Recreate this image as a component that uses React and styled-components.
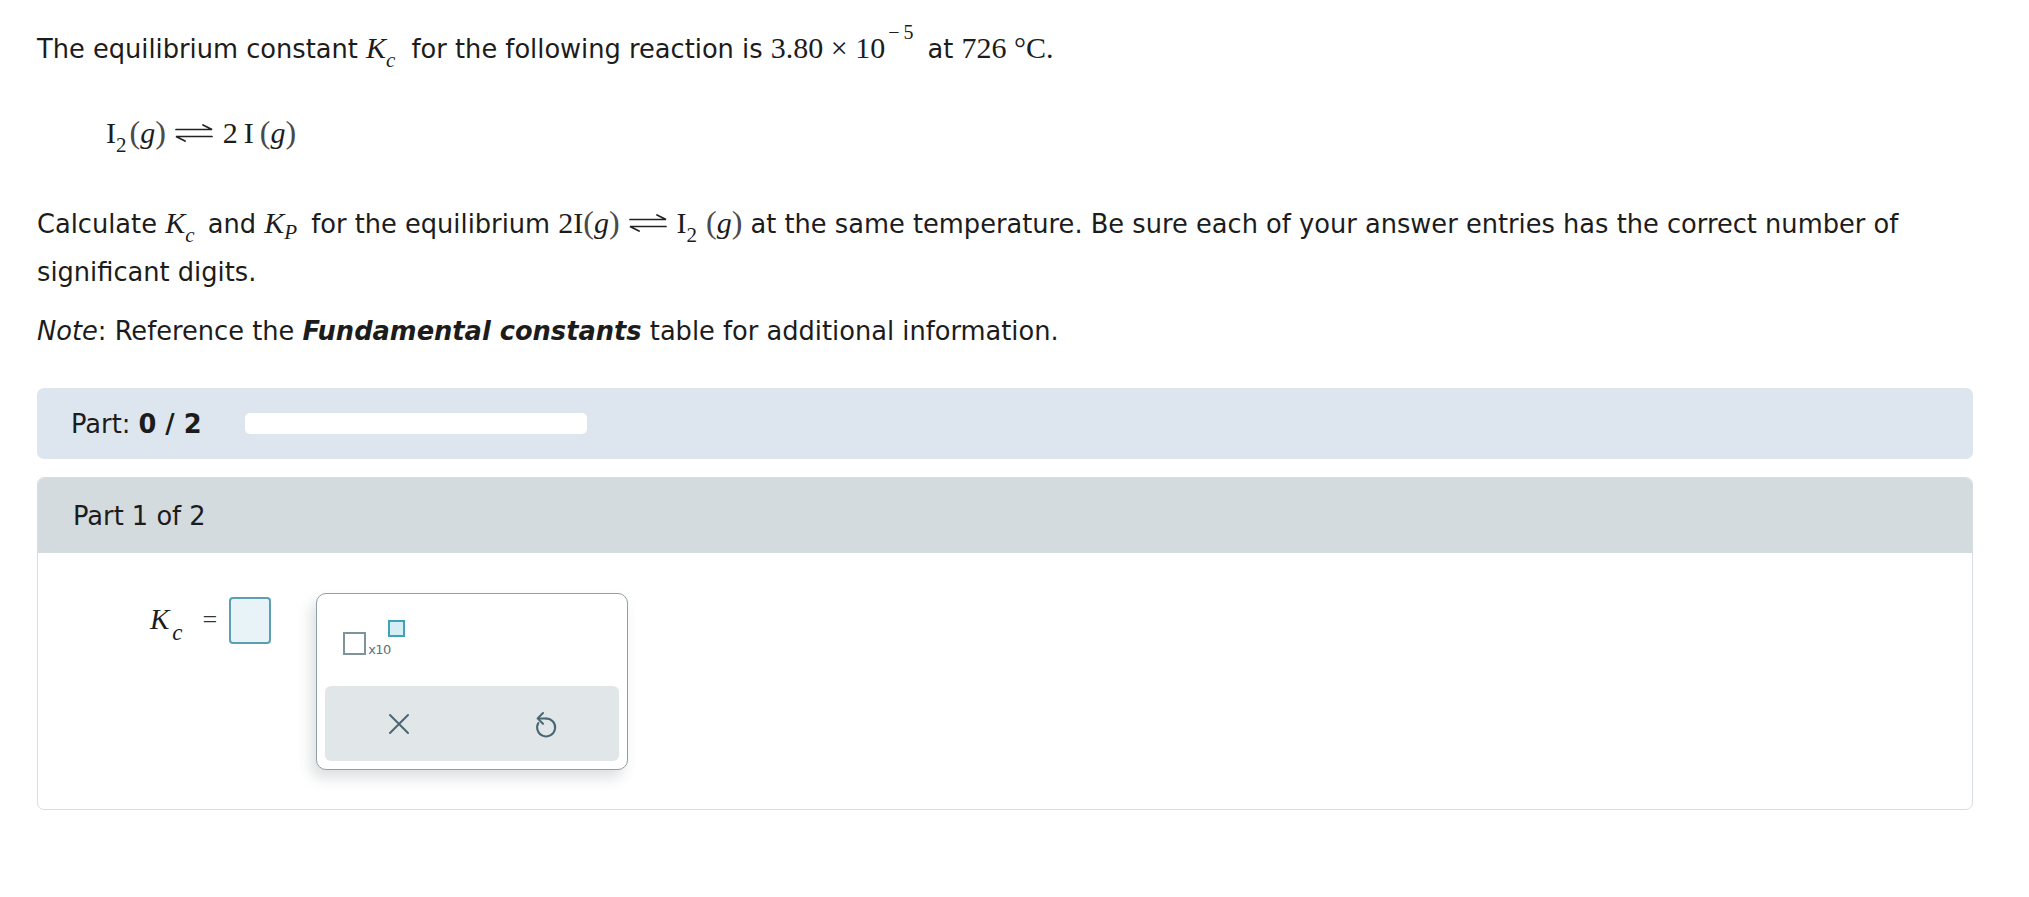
import React from 'react';
import styled, { createGlobalStyle } from 'styled-components';

const GlobalStyle = createGlobalStyle`
  html, body {
    margin: 0;
    padding: 0;
    background: #ffffff;
  }
  body {
    font-family: "DejaVu Sans", Verdana, sans-serif;
    color: #1c1c1c;
  }
  * { box-sizing: border-box; }
`;

const Page = styled.div`
  width: 2029px;
  padding: 22px 56px 0 37px;
`;

const Text = styled.p`
  margin: ${p => p.$mt || 0}px 0 0 ${p => p.$indent || 0}px;
  font-size: 25.7px;
  line-height: 48px;
`;

const M = styled.span`
  font-family: "Liberation Serif", "Times New Roman", serif;
  font-size: ${p => p.$size || 30}px;
  font-style: ${p => (p.$i ? 'italic' : 'normal')};
  line-height: 1;
  color: #1c1c1c;
`;

const Paren = styled.span`
  font-family: "Liberation Serif", "Times New Roman", serif;
  font-size: 32px;
  line-height: 1;
  color: #4a4a4a;
`;

const Sub = styled.span`
  font-family: "Liberation Serif", "Times New Roman", serif;
  font-size: ${p => p.$size || 21}px;
  font-style: ${p => (p.$i ? 'italic' : 'normal')};
  line-height: 1;
  vertical-align: ${p => p.$drop || -0.45}em;
  margin-left: ${p => p.$ml || 0}px;
  margin-right: ${p => p.$mr || 0}px;
`;

const Sup = styled.span`
  font-family: "Liberation Serif", "Times New Roman", serif;
  font-size: 20px;
  line-height: 1;
  vertical-align: 0.95em;
  margin-left: 3px;
  margin-right: 6px;
`;

const Bold = styled.b`
  font-weight: 700;
  font-style: ${p => (p.$i ? 'italic' : 'normal')};
`;

const ArrowSvg = styled.svg`
  display: inline-block;
  vertical-align: 0.05em;
  margin: 0 9px 0 8px;
`;

const EqArrow = () => (
  <ArrowSvg width="40" height="18" viewBox="0 0 40 18">
    <g stroke="#222" strokeWidth="1.7" fill="none" strokeLinecap="round">
      <path d="M2 5.5 H38 L29 1" />
      <path d="M38 12.5 H2 L11 17" />
    </g>
  </ArrowSvg>
);

const PartBar = styled.div`
  margin-top: 33px;
  height: 71px;
  background: #dde6ee;
  border-radius: 7px;
  display: flex;
  align-items: center;
  gap: 43px;
  padding-left: 34px;
  font-size: 25.7px;
`;

const Progress = styled.div`
  width: 342px;
  height: 21px;
  background: #ffffff;
  border-radius: 5px;
`;

const Card = styled.section`
  margin-top: 18px;
  border: 1px solid #d6dee3;
  border-radius: 7px;
  overflow: hidden;
`;

const CardHead = styled.div`
  height: 75px;
  background: #d3dbdf;
  display: flex;
  align-items: center;
  padding-left: 35px;
  font-size: 25.7px;
`;

const CardBody = styled.div`
  display: flex;
  align-items: flex-start;
  padding: 40px 0 39px 112px;
`;

const AnswerRow = styled.div`
  display: flex;
  align-items: center;
  height: 54px;
`;

const Label = styled.span`
  line-height: 1;
  white-space: nowrap;
  padding-top: 9px;
`;

const Eq = styled.span`
  font-family: "Liberation Serif", "Times New Roman", serif;
  font-size: 26px;
  margin: 0 12px 0 20px;
  color: #333;
`;

const InputBox = styled.div`
  width: 42px;
  height: 47px;
  border: 2px solid #5c9fb3;
  background: #e8f3f8;
  border-radius: 4px;
`;

const Palette = styled.div`
  margin-left: 45px;
  width: 312px;
  height: 177px;
  border: 1.5px solid #8d9fa8;
  border-radius: 10px;
  background: #fff;
  box-shadow: -5px 8px 14px rgba(40, 60, 70, 0.16);
  display: flex;
  flex-direction: column;
  padding: 0 8px 8px;
`;

const TemplateRow = styled.div`
  flex: 1;
  display: flex;
  align-items: flex-start;
  padding: 26px 0 0 18px;
`;

const Sci = styled.div`
  display: flex;
  align-items: flex-end;
`;

const Slot = styled.div`
  width: ${p => p.$s}px;
  height: ${p => p.$s}px;
  border: 2px solid ${p => (p.$active ? '#3fa2b8' : '#7f939c')};
  background: ${p => (p.$active ? '#d4eef4' : '#fff')};
  align-self: ${p => (p.$active ? 'flex-start' : 'auto')};
  margin-top: ${p => (p.$active ? 0 : 12)}px;
`;

const Ten = styled.span`
  font-family: "DejaVu Sans", Verdana, sans-serif;
  font-size: 13px;
  color: #5b717b;
  line-height: 1;
  margin: 0 -3px -1px 2px;
  letter-spacing: -0.6px;
`;

const ButtonBar = styled.div`
  height: 75px;
  background: #e1e6e9;
  border-radius: 6px;
  display: grid;
  grid-template-columns: 1fr 1fr;
`;

const IconButton = styled.button`
  border: 0;
  background: transparent;
  display: flex;
  align-items: center;
  justify-content: center;
  padding: 0;
  cursor: pointer;
`;

const ClearIcon = () => (
  <svg width="22" height="22" viewBox="0 0 22 22">
    <path d="M2 2 L20 20 M20 2 L2 20" stroke="#4b6672" strokeWidth="2" strokeLinecap="round" />
  </svg>
);

const UndoIcon = () => (
  <svg width="24" height="30" viewBox="0 0 20 25" style={{ marginTop: 2 }}>
    <g stroke="#4b6672" strokeWidth="1.7" fill="none" strokeLinecap="round" strokeLinejoin="round">
      <path d="M10 7 A7.5 7.5 0 1 1 3.6 10.8" />
      <path d="M7.5 2.5 L3 7 L7.5 11.5 M3 7 H10" />
    </g>
  </svg>
);

export default function App() {
  return (
    <>
      <GlobalStyle />
      <Page>
        <Text>
          The equilibrium constant <M $i>K</M>
          <Sub $i $mr={8}>c</Sub> for the following reaction is <M>3.80 × 10</M>
          <Sup>−&thinsp;5</Sup> at <M>726 °C.</M>
        </Text>

        <Text $mt={37} $indent={69}>
          <M>I</M>
          <Sub $mr={3}>2</Sub>
          <Paren>(</Paren>
          <M $i>g</M>
          <Paren>)</Paren>
          <EqArrow />
          <M>2&thinsp;I&thinsp;</M>
          <Paren>(</Paren>
          <M $i>g</M>
          <Paren>)</Paren>
        </Text>

        <Text $mt={42}>
          Calculate <M $i>K</M>
          <Sub $i $mr={5}>c</Sub> and <M $i>K</M>
          <Sub $i $drop={-0.3} $mr={6}>P</Sub> for the equilibrium <M>2I</M>
          <Paren>(</Paren>
          <M $i>g</M>
          <Paren>)</Paren>
          <EqArrow />
          <M>I</M>
          <Sub $mr={9}>2</Sub>
          <Paren>(</Paren>
          <M $i>g</M>
          <Paren>)</Paren> at the same temperature. Be sure each of your answer entries has the
          correct number of significant digits.
        </Text>

        <Text $mt={11}>
          <i>Note</i>: Reference the <Bold $i>Fundamental constants</Bold> table for additional
          information.
        </Text>

        <PartBar>
          <span>
            Part: <Bold>0 / 2</Bold>
          </span>
          <Progress />
        </PartBar>

        <Card>
          <CardHead>Part 1 of 2</CardHead>
          <CardBody>
            <AnswerRow>
              <Label>
                <M $i $size={29}>K</M>
                <Sub $i $size={23} $drop={-0.5} $ml={3}>c</Sub>
              </Label>
              <Eq>=</Eq>
              <InputBox />
            </AnswerRow>
            <Palette>
              <TemplateRow>
                <Sci>
                  <Slot $s={23} />
                  <Ten>x10</Ten>
                  <Slot $s={17} $active />
                </Sci>
              </TemplateRow>
              <ButtonBar>
                <IconButton aria-label="clear">
                  <ClearIcon />
                </IconButton>
                <IconButton aria-label="undo">
                  <UndoIcon />
                </IconButton>
              </ButtonBar>
            </Palette>
          </CardBody>
        </Card>
      </Page>
    </>
  );
}
